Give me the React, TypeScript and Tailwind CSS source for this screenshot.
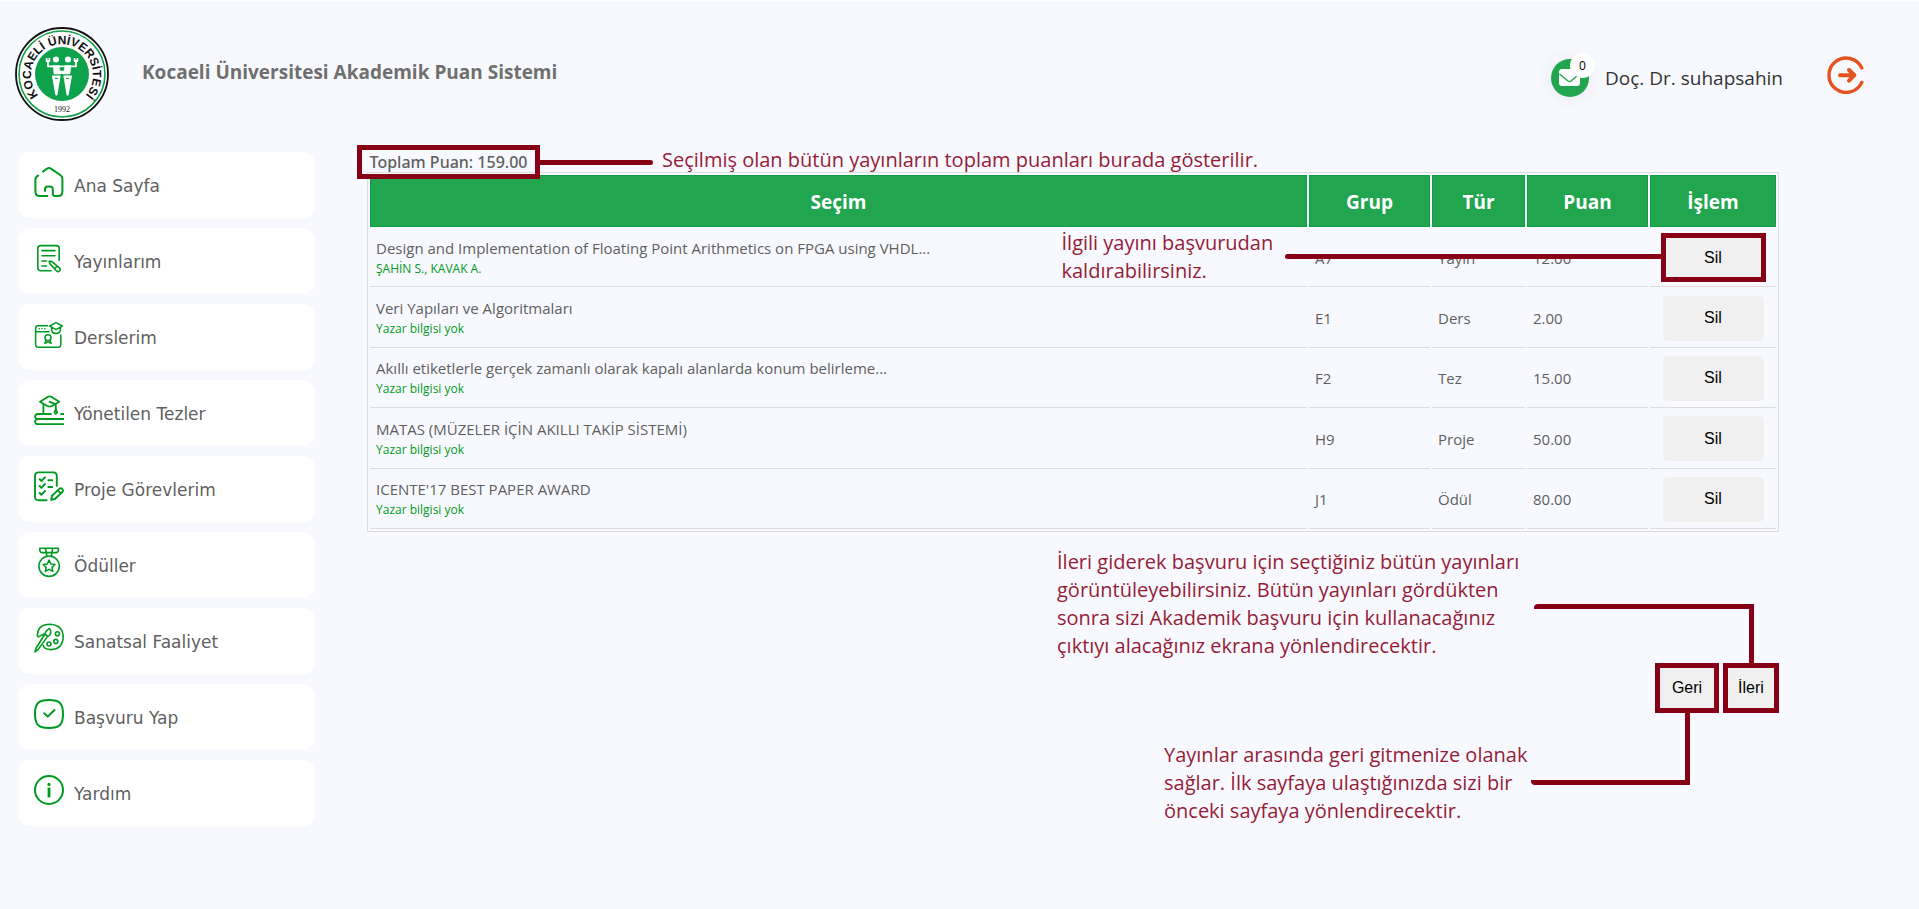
import type { ReactNode } from 'react';

const Icon = ({ children, width = 2 }: { children: ReactNode; width?: number }) => (
  <svg
    viewBox="0 0 30 30"
    className="size-[30px] shrink-0 overflow-visible text-[#009a22]"
    fill="none"
    stroke="currentColor"
    strokeWidth={width}
    strokeLinecap="round"
    strokeLinejoin="round"
    aria-hidden="true"
  >
    {children}
  </svg>
);

const menu: { label: string; icon: ReactNode }[] = [
  {
    label: 'Ana Sayfa',
    icon: (
      <Icon>
        <path d="M9 4.6 12.8 1.8Q15 .3 17.2 1.8L26.6 8.3Q28.4 9.6 28.4 12V24.5Q28.4 29 24 29H21Q18.8 29 18.8 27V22.2Q18.8 19.4 16 19.4H13.8Q11 19.4 11 22.2V24" />
        <path d="M4.2 8.6Q1.4 9.6 1.4 12.8V24.5Q1.4 29 6 29H13.4" />
      </Icon>
    ),
  },
  {
    label: 'Yayınlarım',
    icon: (
      <Icon width={1.6}>
        <path d="M25.2 17.5V5.5Q25.2 2.6 22.2 2.6H6.8Q3.8 2.6 3.8 5.5V24.8Q3.8 27.8 6.8 27.8H17" />
        <path d="M8 7.6H21M8 12.8H21M8 18H12.5M8 23H12.5" />
        <path d="M15.2 18.2 17.6 18.4 25.8 25.2Q26.8 26.6 25.6 28 24.2 29.2 22.8 28.2L15.8 20.6ZM20.6 25.6 23.2 23" />
      </Icon>
    ),
  },
  {
    label: 'Derslerim',
    icon: (
      <Icon width={1.5}>
        <path d="M13.5 6.8H4.2Q1.6 6.8 1.6 9.4V25.6Q1.6 28.2 4.2 28.2H24.2Q26.8 28.2 26.8 25.6V16M1.6 12.8H15" />
        <path d="M5.2 9.8H5.3M8 9.8H8.1M10.8 9.8H10.9" />
        <path d="M15.6 7 22 3.6 28.4 7 22 10.6ZM17.6 8.6V11.6Q18.6 14.6 22 14.6 25.4 14.6 26.4 11.6V8.6" />
        <circle cx="14" cy="18.8" r="3" />
        <path d="M12 21.2 10.8 24.4 14 22.8 17.2 24.4 16 21.2" />
      </Icon>
    ),
  },
  {
    label: 'Yönetilen Tezler',
    icon: (
      <Icon width={1.8}>
        <path d="M6 6.8 13.6 1.9Q15.6 1 17.6 1.9L25.2 6.8 17.6 11.2Q15.6 12 13.6 11.2ZM15.6 6.6 21.8 9.6V15" />
        <path d="M9.4 9.4V18.6M21.8 14.4 20.4 17.4 21.8 19 23.2 17.4Z" />
        <path strokeLinecap="butt" d="M17.6 19H4Q1.1 19 1.1 21.6 1.1 24 4 24H30M26.4 19H30M4 24Q1.1 24.4 1.1 26.7 1.1 29.2 4 29.2H30" />
      </Icon>
    ),
  },
  {
    label: 'Proje Görevlerim',
    icon: (
      <Icon width={1.9}>
        <path d="M12.6 29.2H4.6Q1 29.2 1 25.6V5Q1 1.4 4.6 1.4H19.2Q22.8 1.4 22.8 5V14.8" />
        <path d="M5.6 8.2 7.4 10 11 6.2M5.6 15 7.4 16.8 11 13M5.6 22 7.4 23.8 11 20M14.4 9.2H18.2M14.4 16H18.2" />
        <path d="M17.2 28.8 18 24.8 25.6 17.6Q27 16.8 28.4 18 29.6 19.4 28.6 20.8L21 28ZM24 19.6 26.6 22.2" />
      </Icon>
    ),
  },
  {
    label: 'Ödüller',
    icon: (
      <Icon width={1.6}>
        <path d="M5.8 1.2H24.4V3.2Q24.2 5.6 22 5.6H8.2Q6 5.6 5.8 3.2ZM11.4 1.2 12.4 5.6M18.8 1.2 17.8 5.6M12.6 5.6V9.4M17.6 5.6V9.4" />
        <circle cx="15.1" cy="19.2" r="10.2" />
        <path d="M15.1 13.2 16.9 17 21 17.5 18 20.3 18.8 24.4 15.1 22.4 11.4 24.4 12.2 20.3 9.2 17.5 13.3 17Z" />
      </Icon>
    ),
  },
  {
    label: 'Sanatsal Faaliyet',
    icon: (
      <Icon width={1.6}>
        <path d="M3.4 13.2Q3.4 1.2 16.2 1.2 29 2 29.2 14 28.6 26.4 16.6 26.6 9.4 25.8 9.2 22.2M3.4 13.2Q4 14.4 6.6 12.6L9.6 11.2" />
        <path d="M15.4 5.4Q18 9 15.6 12.4L13.6 13.4 11 11.2Q11.2 7.8 15.4 5.4ZM10.8 11.2 2 25.2 1 29 4 26.6 13.6 13.4" />
        <circle cx="23.4" cy="10.8" r="2" />
        <circle cx="21.8" cy="18.4" r="2" />
        <circle cx="15" cy="21" r="2" />
      </Icon>
    ),
  },
  {
    label: 'Başvuru Yap',
    icon: (
      <Icon>
        <path d="M15 1C25.6 1 29 4.4 29 15S25.6 29 15 29 1 25.6 1 15 4.4 1 15 1Z" />
        <path d="M10.2 14.2 13.8 17.6 20.4 11" />
      </Icon>
    ),
  },
  {
    label: 'Yardım',
    icon: (
      <Icon>
        <circle cx="15" cy="15" r="14" />
        <path strokeWidth="2.8" strokeLinecap="butt" d="M15 12.6V22.4" />
        <circle cx="15" cy="9.4" r="1.6" fill="currentColor" stroke="none" />
      </Icon>
    ),
  },
];

const rows = [
  {
    title: 'Design and Implementation of Floating Point Arithmetics on FPGA using VHDL...',
    authors: 'ŞAHİN S., KAVAK A.',
    group: 'A7',
    kind: 'Yayın',
    points: '12.00',
  },
  { title: 'Veri Yapıları ve Algoritmaları', authors: 'Yazar bilgisi yok', group: 'E1', kind: 'Ders', points: '2.00' },
  {
    title: 'Akıllı etiketlerle gerçek zamanlı olarak kapalı alanlarda konum belirleme...',
    authors: 'Yazar bilgisi yok',
    group: 'F2',
    kind: 'Tez',
    points: '15.00',
  },
  { title: 'MATAS (MÜZELER İÇİN AKILLI TAKİP SİSTEMİ)', authors: 'Yazar bilgisi yok', group: 'H9', kind: 'Proje', points: '50.00' },
  { title: "ICENTE'17 BEST PAPER AWARD", authors: 'Yazar bilgisi yok', group: 'J1', kind: 'Ödül', points: '80.00' },
];

const Logo = () => (
  <svg viewBox="0 0 94 94" className="size-[94px] shrink-0" role="img" aria-label="Kocaeli Üniversitesi">
    <circle cx="47" cy="47" r="46" fill="#fff" stroke="#111" strokeWidth="1.8" />
    <circle cx="47" cy="47" r="43" fill="none" stroke="#12a04a" strokeWidth="1.6" />
    <circle cx="47" cy="47" r="27" fill="#0da24b" />
    <path id="logo-arc" d="M24.5 69.5A31 31 0 1 1 69.5 69.5" fill="none" />
    <text fontFamily="Liberation Sans" fontWeight="700" fontSize="12" fill="#111" textAnchor="middle">
      <textPath href="#logo-arc" startOffset="50%">
        KOCAELİ ÜNİVERSİTESİ
      </textPath>
    </text>
    <text x="47" y="85" fontFamily="Liberation Serif" fontSize="8" fill="#111" textAnchor="middle">
      1992
    </text>
    <g fill="#fff" stroke="#fff" strokeLinejoin="round">
      <circle cx="41" cy="32.4" r="3" stroke="none" />
      <circle cx="53" cy="32.4" r="3" stroke="none" />
      <path d="M33 34V39.4H61V34M31.6 31V34H34.4V31M59.6 31V34H62.4V31" fill="none" strokeWidth="1.8" />
      <path d="M38 38.6H44L45 44H49L50 38.6H56L55 47H39Z" strokeWidth=".5" />
      <path d="M37.6 49H45L41.8 68H41ZM49 49H56.4L53 68H52.2Z" strokeWidth="1.2" />
    </g>
    <path d="M47 40V43M46 47.4H48M40 51.4H43M51 51.4H54" stroke="#0da24b" strokeWidth="1" />
  </svg>
);

const noteText = 'text-[20px] leading-[28px] whitespace-nowrap text-[#951c38]';

const DeleteButton = ({ marked }: { marked: boolean }) => (
  <button
    type="button"
    className={
      marked
        ? 'block h-[49px] w-[105px] border-[5px] border-[#880015] bg-[#f0f0f0] font-["Liberation_Sans",sans-serif] text-base text-black'
        : 'block h-[45px] w-[101px] rounded-[5px] bg-[#f0f0f0] font-["Liberation_Sans",sans-serif] text-base text-black'
    }
  >
    Sil
  </button>
);

const headCell = 'border border-[#0f9d45] bg-[#21a54f] p-0 pt-[2px] text-center text-[19px] font-bold text-white';
const bodyCell = 'border-b border-[#dcdcdc] p-0 pl-[6px]';

export default function App() {
  return (
    <div className='min-h-screen overflow-x-hidden border-t border-white bg-[#f8f9fe] pb-10 font-["Open_Sans","Noto_Sans",sans-serif] text-[#5f5f5f]'>
      <header className="flex h-[144px] items-start pt-[26px] pr-[54px] pl-[15px]">
        <Logo />
        <h1 className="ml-[33px] text-[19px] leading-[90px] font-bold text-[#6f6f6f]">Kocaeli Üniversitesi Akademik Puan Sistemi</h1>
        <div className="ml-auto flex h-[102px] items-center">
          <button type="button" aria-label="Mesajlar" className="relative size-[38px] rounded-full bg-[#21a54f] shadow-[0_0_20px_rgba(0,0,0,0.08)]">
            <svg viewBox="0 0 38 38" className="size-[38px]" aria-hidden="true">
              <rect x="8" y="10" width="21" height="17" rx="3" fill="#fff" />
              <path d="M8.5 15 17 22Q18.5 23 20 22L28.5 15" fill="none" stroke="#21a54f" strokeWidth="1.4" />
            </svg>
            <span className="absolute -top-[6px] -right-[6px] size-[25px] rounded-full bg-white text-xs leading-[25px] text-black">0</span>
          </button>
          <span className="ml-4 text-[19px] text-[#333]">Doç. Dr. suhapsahin</span>
          <button type="button" aria-label="Çıkış" className="mb-[6px] ml-[44px]">
            <svg
              viewBox="0 0 38 38"
              className="size-[38px] text-[#e4531f]"
              fill="none"
              stroke="currentColor"
              strokeWidth="3.4"
              strokeLinecap="round"
              strokeLinejoin="round"
              aria-hidden="true"
            >
              <path d="M34.8 12A17.2 17.2 0 1 0 34.8 26.4" />
              <path strokeWidth="4" d="M13 19.2H27M22 14 27.4 19.2 22 24.6" />
            </svg>
          </button>
        </div>
      </header>

      <div className="flex items-start">
        <nav className="ml-[18px] flex w-[297px] shrink-0 flex-col gap-[10px] pt-[7px]">
          {menu.map((item) => (
            <a
              key={item.label}
              href="#"
              className='flex h-[66px] items-start gap-[10px] rounded-xl bg-white pt-[15px] pl-4 font-["DejaVu_Sans",sans-serif] text-[17px] leading-[38px] text-[#5f5f5f]'
            >
              {item.icon}
              {item.label}
            </a>
          ))}
        </nav>

        <main className="mr-[140px] ml-[52px] min-w-0 flex-1">
          <div className="relative z-10 -mb-[7px] -ml-[10px] flex h-[34px] items-center">
            <p className='h-[34px] w-[183px] border-[5px] border-[#880015] text-center font-["Noto_Sans",sans-serif] text-[16px] leading-[24px] font-medium whitespace-nowrap'>
              Toplam Puan: 159.00
            </p>
            <div className="h-[5px] w-[113px] rounded-r-sm bg-[#880015]" />
            <p className={`${noteText} mb-1 ml-[9px]`}>Seçilmiş olan bütün yayınların toplam puanları burada gösterilir.</p>
          </div>

          <table className="h-[360px] w-full table-fixed border-separate border-spacing-[2px] border border-[#dcdcdc] text-[15px] leading-[22px]">
            <colgroup>
              <col />
              <col className="w-[121px]" />
              <col className="w-[93px]" />
              <col className="w-[121px]" />
              <col className="w-[126px]" />
            </colgroup>
            <thead>
              <tr className="h-[52px]">
                <th className={headCell}>Seçim</th>
                <th className={headCell}>Grup</th>
                <th className={headCell}>Tür</th>
                <th className={headCell}>Puan</th>
                <th className={headCell}>İşlem</th>
              </tr>
            </thead>
            <tbody>
              {rows.map((row, i) => (
                <tr key={row.title}>
                  <td className={bodyCell}>
                    <div>{row.title}</div>
                    <div className="text-[12px] leading-5 font-medium text-[#009a22]">{row.authors}</div>
                  </td>
                  <td className={bodyCell}>{row.group}</td>
                  <td className={bodyCell}>{row.kind}</td>
                  <td className={bodyCell}>{row.points}</td>
                  <td className="border-b border-[#dcdcdc] p-0">
                    <div className="relative mx-auto flex h-[45px] w-fit items-center">
                      {i === 0 && (
                        <div className="absolute top-1/2 right-full flex -translate-y-1/2 items-center pb-[2px]">
                          <p className={`${noteText} w-[223px]`}>
                            İlgili yayını başvurudan
                            <br />
                            kaldırabilirsiniz.
                          </p>
                          <div className="h-[5px] w-[376px] rounded-l-sm bg-[#880015]" />
                        </div>
                      )}
                      <DeleteButton marked={i === 0} />
                    </div>
                  </td>
                </tr>
              ))}
            </tbody>
          </table>

          <section className="flex flex-col items-end pt-4">
            <div className="mr-[25px] flex items-start">
              <p className={`${noteText} w-[477px] pb-[3px]`}>
                İleri giderek başvuru için seçtiğiniz bütün yayınları
                <br />
                görüntüleyebilirsiniz. Bütün yayınları gördükten
                <br />
                sonra sizi Akademik başvuru için kullanacağınız
                <br />
                çıktıyı alacağınız ekrana yönlendirecektir.
              </p>
              <div className="h-[59px] w-[220px] self-end rounded-tl-sm border-t-[5px] border-r-[5px] border-[#880015]" />
            </div>
            <div className='flex gap-1 font-["Liberation_Sans",sans-serif] text-base text-black'>
              <button type="button" className="h-[50px] w-[64px] border-[5px] border-[#880015] bg-[#f0f0f0]">
                Geri
              </button>
              <button type="button" className="h-[50px] w-[56px] border-[5px] border-[#880015] bg-[#f0f0f0]">
                İleri
              </button>
            </div>
            <div className="mr-[89px] flex items-start">
              <p className={`${noteText} w-[367px] pt-[28px]`}>
                Yayınlar arasında geri gitmenize olanak
                <br />
                sağlar. İlk sayfaya ulaştığınızda sizi bir
                <br />
                önceki sayfaya yönlendirecektir.
              </p>
              <div className="h-[72px] w-[159px] rounded-bl-sm border-r-[5px] border-b-[5px] border-[#880015]" />
            </div>
          </section>
        </main>
      </div>
    </div>
  );
}
